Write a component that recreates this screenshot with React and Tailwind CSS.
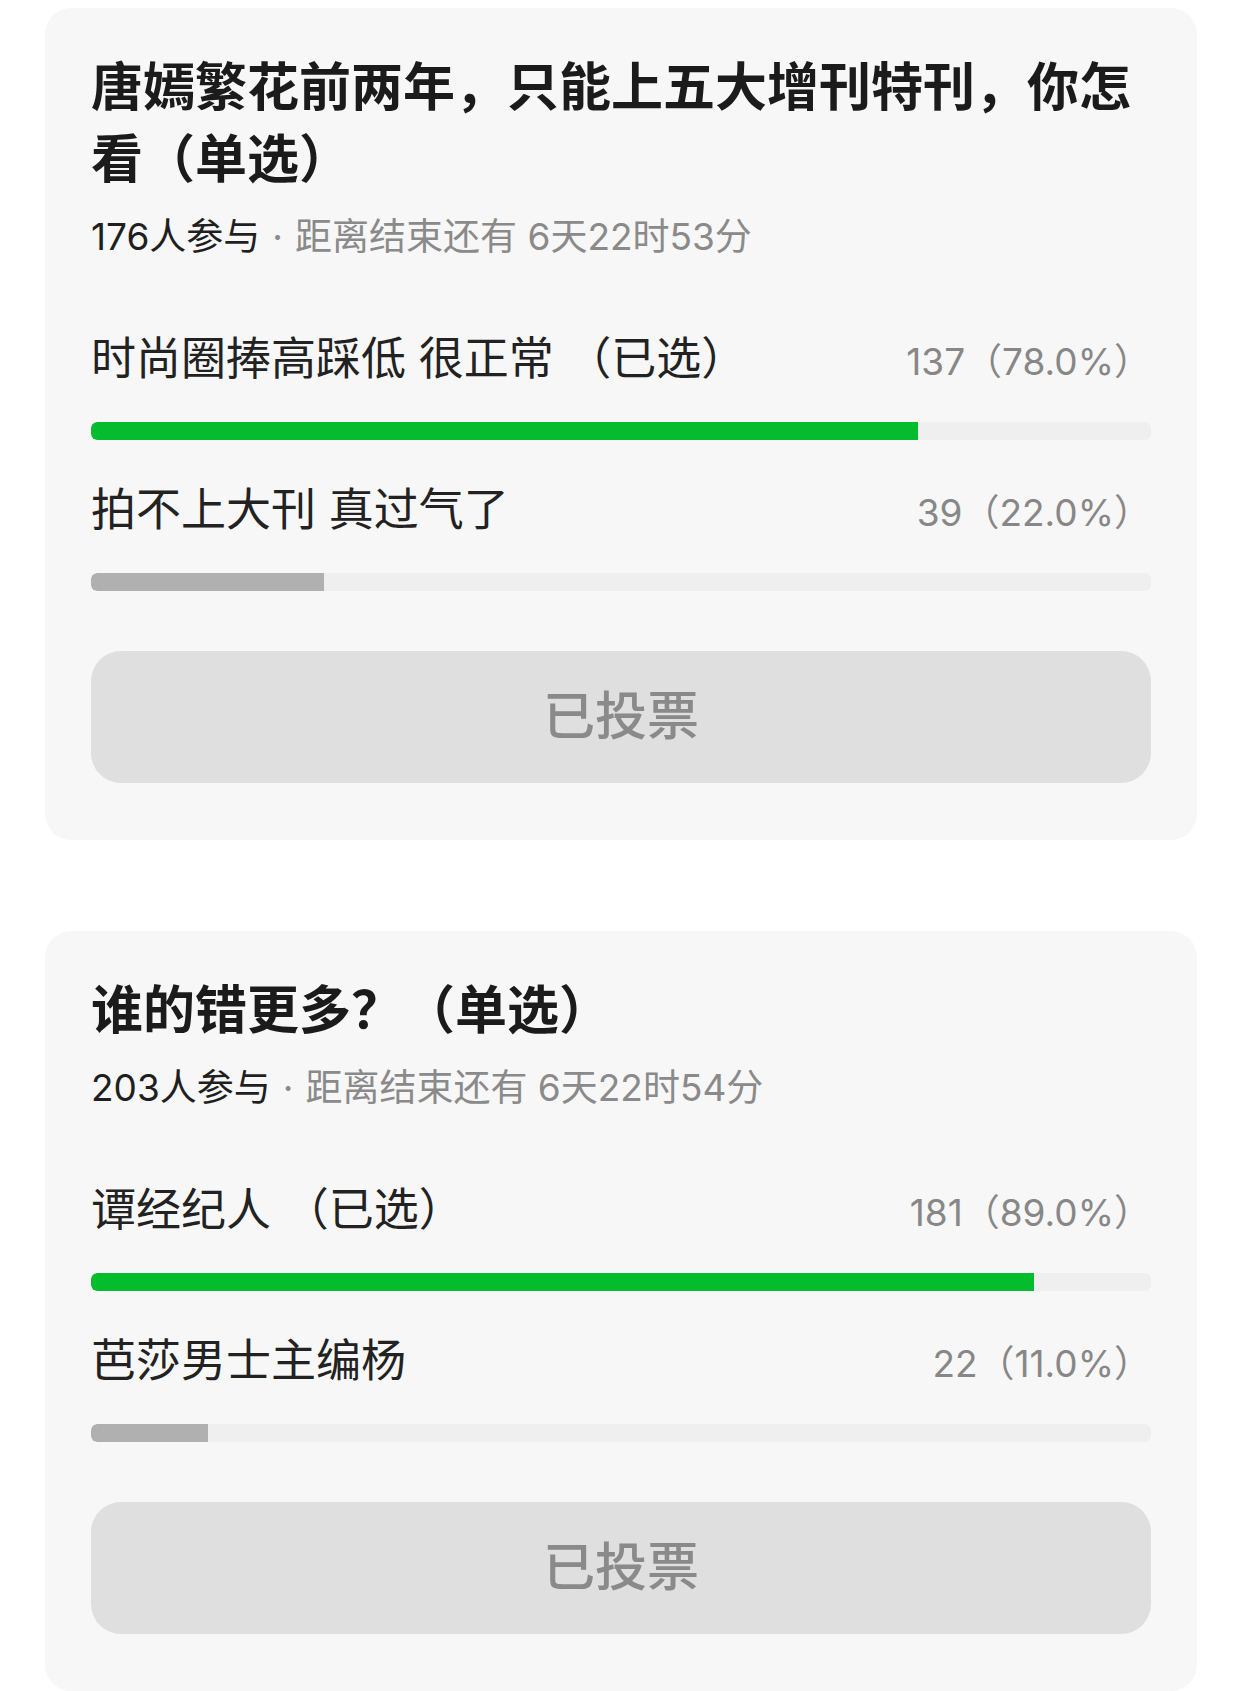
import React from "react";

const polls = [
  {
    title: "唐嫣繁花前两年，只能上五大增刊特刊，你怎看（单选）",
    count: 176,
    remain: "距离结束还有 6天22时53分",
    options: [
      { label: "时尚圈捧高踩低 很正常 （已选）", votes: "137（78.0%）", pct: 78, picked: true },
      { label: "拍不上大刊 真过气了", votes: "39（22.0%）", pct: 22, picked: false },
    ],
  },
  {
    title: "谁的错更多？（单选）",
    count: 203,
    remain: "距离结束还有 6天22时54分",
    options: [
      { label: "谭经纪人 （已选）", votes: "181（89.0%）", pct: 89, picked: true },
      { label: "芭莎男士主编杨", votes: "22（11.0%）", pct: 11, picked: false },
    ],
  },
];

function PollCard({ poll }) {
  return (
    <div className="mx-[45px] rounded-[26px] bg-[#f7f7f7] px-[46px] pt-[44px] pb-[57px]">
      <h2 className="text-[52px] leading-[72px] font-bold text-[#1b1b1b]">{poll.title}</h2>
      <div className="mt-[17px] text-[37px] leading-[48px] text-[#8a8a8a]">
        <span className="text-[#1f1f1f]">{poll.count}人参与</span>
        <span className="mx-[12px]">·</span>
        {poll.remain}
      </div>

      <div className="mt-[70px] flex flex-col gap-[42px]">
        {poll.options.map((opt, i) => (
          <div key={i}>
            <div className="flex h-[56px] items-baseline justify-between">
              <span className="text-[45px] leading-[56px] text-[#222]">{opt.label}</span>
              <span className="text-[37px] leading-[40px] text-[#878787]">{opt.votes}</span>
            </div>
            <div className="mt-[35px] h-[18px] rounded-[6px] bg-[#efefef] overflow-hidden">
              <div
                className={opt.picked ? "h-full rounded-l-[6px] bg-[#05bb2e]" : "h-full rounded-l-[6px] bg-[#b0b0b0]"}
                style={{ width: `${opt.pct}%` }}
              />
            </div>
          </div>
        ))}
      </div>

      <button className="mt-[60px] flex h-[132px] w-full items-center justify-center rounded-[30px] bg-[#dfdfdf] text-[52px] font-medium text-[#8a8a8a]">
        已投票
      </button>
    </div>
  );
}

export default function App() {
  return (
    <div className="min-h-screen bg-white pt-[8px] font-['Inter','Noto_Sans_CJK_SC',sans-serif]">
      <PollCard poll={polls[0]} />
      <div className="h-[91px]" />
      <PollCard poll={polls[1]} />
    </div>
  );
}
